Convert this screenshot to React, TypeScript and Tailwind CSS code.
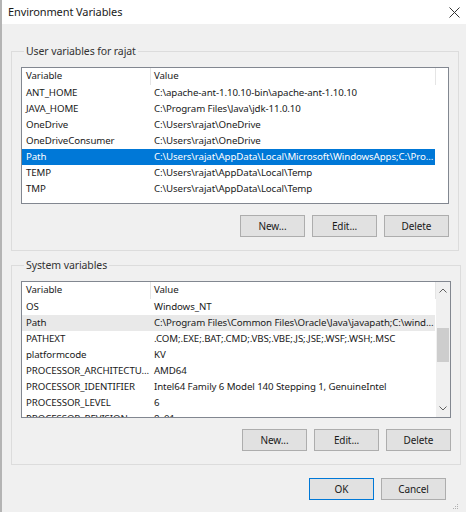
import React from "react";

type Row = { name: string; value: string; state?: "selected" | "hover" };

const USER_VARS: Row[] = [
  { name: "ANT_HOME", value: "C:\\apache-ant-1.10.10-bin\\apache-ant-1.10.10" },
  { name: "JAVA_HOME", value: "C:\\Program Files\\Java\\jdk-11.0.10" },
  { name: "OneDrive", value: "C:\\Users\\rajat\\OneDrive" },
  { name: "OneDriveConsumer", value: "C:\\Users\\rajat\\OneDrive" },
  {
    name: "Path",
    value: "C:\\Users\\rajat\\AppData\\Local\\Microsoft\\WindowsApps;C:\\Pro...",
    state: "selected",
  },
  { name: "TEMP", value: "C:\\Users\\rajat\\AppData\\Local\\Temp" },
  { name: "TMP", value: "C:\\Users\\rajat\\AppData\\Local\\Temp" },
];

const SYSTEM_VARS: Row[] = [
  { name: "OS", value: "Windows_NT" },
  {
    name: "Path",
    value: "C:\\Program Files\\Common Files\\Oracle\\Java\\javapath;C:\\wind...",
    state: "hover",
  },
  { name: "PATHEXT", value: ".COM;.EXE;.BAT;.CMD;.VBS;.VBE;.JS;.JSE;.WSF;.WSH;.MSC" },
  { name: "platformcode", value: "KV" },
  { name: "PROCESSOR_ARCHITECTU...", value: "AMD64" },
  { name: "PROCESSOR_IDENTIFIER", value: "Intel64 Family 6 Model 140 Stepping 1, GenuineIntel" },
  { name: "PROCESSOR_LEVEL", value: "6" },
  { name: "PROCESSOR_REVISION", value: "8c01" },
];

function Button({ label, primary }: { label: string; primary?: boolean }) {
  return (
    <button
      className={
        "h-[22px] w-[65px] bg-[#e1e1e1] text-[10px] text-[#1a1a1a] " +
        (primary ? "border border-[#0078d7]" : "border border-[#adadad]")
      }
    >
      {label}
    </button>
  );
}

function VarList({ rows, scroll }: { rows: Row[]; scroll?: boolean }) {
  return (
    <div className="flex h-[137px] border border-[#828790] bg-white">
      <div className="flex-1 overflow-hidden">
        <div className="flex h-[17px] items-center text-[#1a1a1a]">
          <div className="w-[128px] shrink-0 pl-[4px]">Variable</div>
          <div className="h-full w-px bg-[#e5e5e5]" />
          <div className="w-[284px] shrink-0 pl-[3px]">Value</div>
          <div className="h-full w-px bg-[#e5e5e5]" />
        </div>
        {rows.map((r) => (
          <div
            key={r.name}
            className={
              "flex h-[16px] w-[413px] items-center whitespace-nowrap " +
              (r.state === "selected"
                ? "bg-[#0078d7] text-white"
                : r.state === "hover"
                  ? "bg-[#e9e9e9] text-[#1a1a1a]"
                  : "text-[#1a1a1a]")
            }
          >
            <div className="w-[129px] shrink-0 overflow-hidden pl-[4px]">{r.name}</div>
            <div className="w-[284px] shrink-0 overflow-hidden pl-[3px]">{r.value}</div>
          </div>
        ))}
      </div>
      {scroll && (
        <div className="flex w-[14px] shrink-0 flex-col bg-[#f0f0f0]">
          <div className="flex h-[17px] items-center justify-center">
            <svg width="8" height="5" viewBox="0 0 8 5">
              <path d="M0.5 4.5 L4 1 L7.5 4.5" fill="none" stroke="#606060" strokeWidth="1" />
            </svg>
          </div>
          <div className="mx-[1px] mt-[29px] h-[34px] bg-[#cdcdcd]" />
          <div className="flex-1" />
          <div className="flex h-[17px] items-center justify-center">
            <svg width="8" height="5" viewBox="0 0 8 5">
              <path d="M0.5 0.5 L4 4 L7.5 0.5" fill="none" stroke="#606060" strokeWidth="1" />
            </svg>
          </div>
        </div>
      )}
    </div>
  );
}

function Group({
  title,
  rows,
  scroll,
  className,
}: {
  title: string;
  rows: Row[];
  scroll?: boolean;
  className?: string;
}) {
  return (
    <fieldset className={"border border-[#dcdcdc] px-[9px] " + (className ?? "")}>
      <legend className="ml-[3px] px-[2px] text-[10.5px] leading-[16px] text-[#333]">{title}</legend>
      <div className="mt-[8px]">
        <VarList rows={rows} scroll={scroll} />
      </div>
      <div className="mt-[11px] flex justify-end gap-[7px] pb-[13px]">
        <Button label="New..." />
        <Button label="Edit..." />
        <Button label="Delete" />
      </div>
    </fieldset>
  );
}

export default function App() {
  return (
    <div
      className="flex h-[512px] w-[466px] flex-col border-l-2 border-[#b4b4b4] bg-[#f0f0f0] text-[9.7px] tracking-[-0.1px]"
      style={{ fontFamily: '"Noto Sans", "Open Sans", sans-serif' }}
    >
      <div className="flex h-[24px] items-center justify-between bg-white pl-[6px] pr-[6px]">
        <span className="text-[11px] text-[#1a1a1a]">Environment Variables</span>
        <svg width="11" height="11" viewBox="0 0 11 11">
          <path d="M0.5 0.5 L10.5 10.5 M10.5 0.5 L0.5 10.5" stroke="#333" strokeWidth="1" />
        </svg>
      </div>
      <div className="flex flex-1 flex-col pl-[9px] pr-[7px]">
        <Group className="mt-[19px]" title="User variables for rajat" rows={USER_VARS} />
        <Group className="mt-[6px]" title="System variables" rows={SYSTEM_VARS} scroll />
        <div className="mt-[13px] flex justify-end gap-[7px] pr-[13px]">
          <Button label="OK" primary />
          <Button label="Cancel" />
        </div>
        <div className="flex flex-1 items-end justify-end pb-[2px]">
          <svg width="6" height="6" viewBox="0 0 6 6">
            <rect x="4" y="0" width="1" height="1" fill="#b0b0b0" />
            <rect x="2" y="2" width="1" height="1" fill="#b0b0b0" />
            <rect x="4" y="2" width="1" height="1" fill="#b0b0b0" />
            <rect x="0" y="4" width="1" height="1" fill="#b0b0b0" />
            <rect x="2" y="4" width="1" height="1" fill="#b0b0b0" />
            <rect x="4" y="4" width="1" height="1" fill="#b0b0b0" />
          </svg>
        </div>
      </div>
    </div>
  );
}
